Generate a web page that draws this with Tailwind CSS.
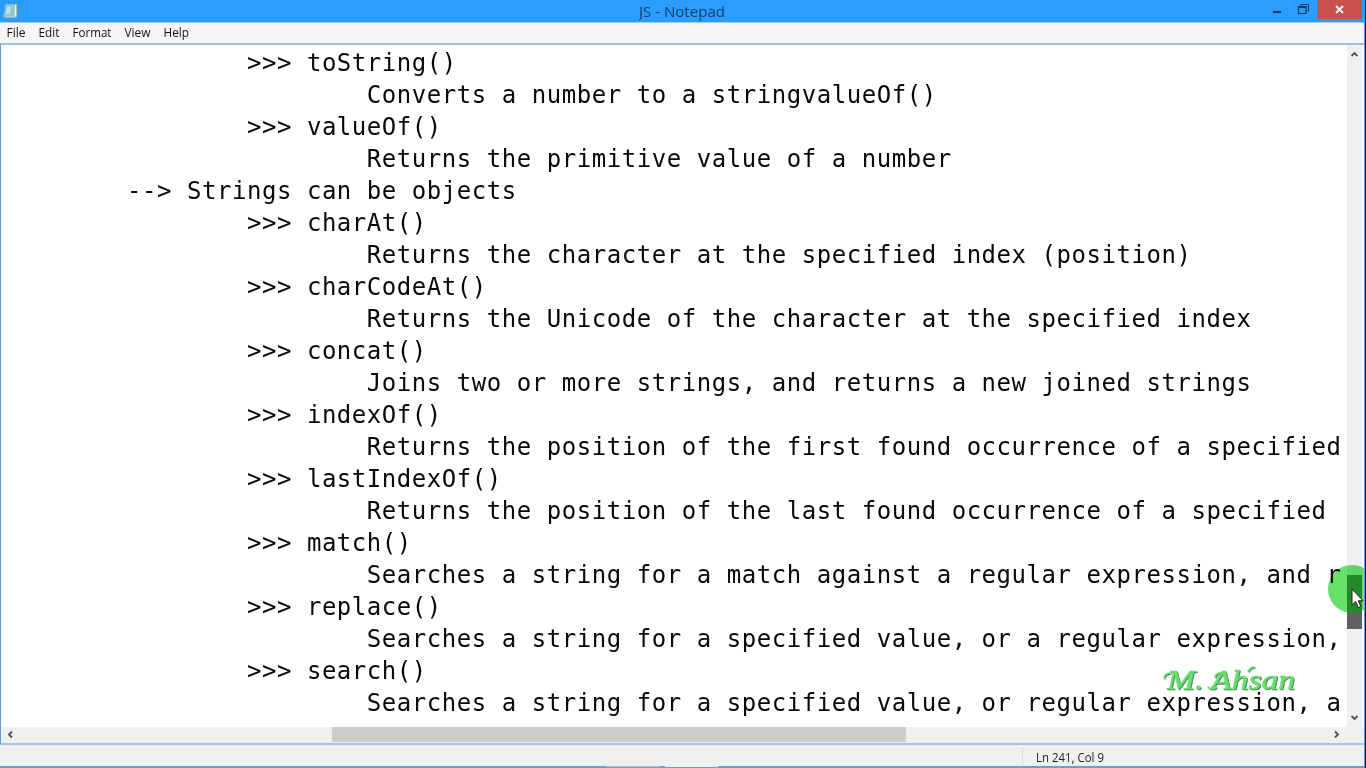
<!DOCTYPE html>
<html lang="en">
<head>
<meta charset="utf-8">
<title>JS - Notepad</title>
<script src="https://cdn.jsdelivr.net/npm/@tailwindcss/browser@4"></script>
</head>
<body class="w-[1366px] h-[768px] overflow-hidden bg-[#f0f0f0] font-['Open_Sans',sans-serif]">
<div class="relative flex h-[768px] w-[1366px] flex-col overflow-hidden">
  <header class="flex h-[22px] shrink-0 items-start bg-[#2b9dff]">
    <svg class="ml-[3px] mt-[3px] shrink-0" width="15" height="16" viewBox="0 0 15 16">
      <path d="M3 1.5h11v13H2z" fill="#eef6ec"/>
      <path d="M2.500 2h9.500l-.5 11.500H.5z" fill="#8cc9d1"/>
      <path d="M4 4h4L6.500 11H3z" fill="#bfe4e6"/>
      <path d="M3 1.500h10" stroke="#6aa9bf" stroke-dasharray="1 1"/>
      <path d="M.5 14.200H13.700V2" stroke="#a9a98c" fill="none"/>
    </svg>
    <div class="flex-1 pl-[621px] pt-[3px]"><svg class="block" width="90" height="18"><text x="0" y="14" font-size="14" textLength="86" lengthAdjust="spacingAndGlyphs" fill="#123f69">JS - Notepad</text></svg></div>
    <svg class="shrink-0" width="49" height="22" viewBox="0 0 49 22">
      <path d="M5 12h8" stroke="#12385c" stroke-width="2"/>
      <path d="M33 6V4.500h7.500V11H38" stroke="#12385c" fill="none"/>
      <path d="M30.500 6.500h7.500v7h-7.500z" stroke="#12385c" stroke-width="1.200" fill="none"/><path d="M30 7h8.500" stroke="#12385c" stroke-width="2"/>
    </svg>
    <div class="flex h-[19px] w-[45px] items-center justify-center bg-[#c9504c]"><svg width="9" height="9" viewBox="0 0 9 9"><path d="m1 1 7 7M8 1 1 8" stroke="#fff" stroke-width="1.8"/></svg></div>
    <div class="h-full w-[4px]"></div>
  </header>
  <nav class="h-[21px] shrink-0 border-t border-[#9ccdf8] bg-[#f5f6f7]">
    <svg class="block" width="240" height="20" font-size="12" fill="#111">
      <text x="6.500" y="14" textLength="19" lengthAdjust="spacingAndGlyphs">File</text>
      <text x="38.500" y="14" textLength="21" lengthAdjust="spacingAndGlyphs">Edit</text>
      <text x="72.500" y="14" textLength="39" lengthAdjust="spacingAndGlyphs">Format</text>
      <text x="124.500" y="14" textLength="26" lengthAdjust="spacingAndGlyphs">View</text>
      <text x="163.500" y="14" textLength="25.500" lengthAdjust="spacingAndGlyphs">Help</text>
    </svg>
  </nav>
  <main class="flex h-[702px] shrink-0 flex-col border-y-2 border-l border-t-[#9fc0e4] border-b-[#a4c4ea] border-l-[#6a9bd0] bg-white">
    <div class="flex h-[682px]">
      <pre class="w-[1346px] shrink-0 overflow-hidden pl-[6px] pt-[2px] font-['DejaVu_Sans_Mono',monospace] text-[24px] leading-[32px] tracking-[0.545px] text-[#080808]">                &gt;&gt;&gt; toString()
                        Converts a number to a stringvalueOf()
                &gt;&gt;&gt; valueOf()
                        Returns the primitive value of a number
        --&gt; Strings can be objects
                &gt;&gt;&gt; charAt()
                        Returns the character at the specified index (position)
                &gt;&gt;&gt; charCodeAt()
                        Returns the Unicode of the character at the specified index
                &gt;&gt;&gt; concat()
                        Joins two or more strings, and returns a new joined strings
                &gt;&gt;&gt; indexOf()
                        Returns the position of the first found occurrence of a specified
                &gt;&gt;&gt; lastIndexOf()
                        Returns the position of the last found occurrence of a specified
                &gt;&gt;&gt; match()
                        Searches a string for a match against a regular expression, and r
                &gt;&gt;&gt; replace()
                        Searches a string for a specified value, or a regular expression,
                &gt;&gt;&gt; search()
                        Searches a string for a specified value, or regular expression, a</pre>
      <div class="flex w-[15px] shrink-0 flex-col items-center bg-[#f0f0f0]">
        <svg class="mt-[5px] shrink-0" width="9" height="8" viewBox="0 0 9 8"><path d="M1.500 6 4.500 3 7.500 6" stroke="#505050" stroke-width="1.800" fill="none"/></svg>
        <div class="mt-[517px] h-[54px] w-[15px] shrink-0 bg-[#606060]"></div>
        <svg class="mt-[85px] shrink-0" width="9" height="8" viewBox="0 0 9 8"><path d="M1.500 2 4.500 5 7.500 2" stroke="#505050" stroke-width="1.800" fill="none"/></svg>
      </div>
    </div>
    <div class="flex h-[16px] w-[1363px] items-start bg-[#f0f0f0]">
      <svg class="ml-[5px] mt-[3px] shrink-0" width="8" height="9" viewBox="0 0 8 9"><path d="M6 1.500 3 4.500 6 7.500" stroke="#505050" stroke-width="1.800" fill="none"/></svg>
      <div class="ml-[318px] h-[15px] w-[574px] bg-[#cdcdcd]"></div>
      <svg class="ml-[427px] mt-[3px] shrink-0" width="8" height="9" viewBox="0 0 8 9"><path d="M2 1.500 5 4.500 2 7.500" stroke="#505050" stroke-width="1.800" fill="none"/></svg>
    </div>
  </main>
  <footer class="flex h-[23px] shrink-0 flex-col bg-[#f0f0f0]">
    <div class="flex h-[21px] pt-[2px]">
      <div class="ml-[1022px] h-[18px] w-px bg-[#dcdcdc]"></div>
      <svg class="ml-[13px]" width="80" height="19"><text x="0" y="15" font-size="12" textLength="68" lengthAdjust="spacingAndGlyphs" fill="#222">Ln 241, Col 9</text></svg>
    </div>
    <div class="flex h-[2px] bg-[#6f9ec9]"><div class="ml-[606px] h-px w-[54px] bg-[#a9c6e0]"></div><div class="ml-[5px] h-px w-[53px] bg-[#e8eff8]"></div></div>
  </footer>

  <svg class="absolute left-[1150px] top-[658px] font-['Liberation_Serif',serif] italic drop-shadow-[1px_1px_0_#4d8a50]" width="160" height="46" font-size="28" fill="#69df71" stroke="#69df71">
    <text x="17" y="31" textLength="128" lengthAdjust="spacingAndGlyphs" stroke-width=".5">M. Ahsan</text>
    <path d="M20 15q-6 1-6 5M58 29q3 3 8 0M74 15q-8-1-9 4M98 13q3-4 6-4" fill="none" stroke-width="1.500" stroke-linecap="round"/>
  </svg>
  <div class="absolute left-[1328px] top-[565px] size-[48px] rounded-full bg-[#66e16b] mix-blend-multiply"></div>
  <div class="absolute left-[1347px] top-[575px] h-[38px] w-[15px] bg-[#228b28]"></div>
  <svg class="absolute left-[1351px] top-[588px]" width="13" height="21" viewBox="0 0 13 21"><path d="M1 1v16l3.700-3.400 2.600 6 2.500-1.100-2.500-5.700H12z" fill="#fff" stroke="#222"/></svg>
  <div class="absolute left-[1364px] top-[22px] h-[744px] w-px bg-[#5f9bdd]"></div>
  <div class="absolute left-[1365px] top-0 h-[768px] w-px bg-[#101820]"></div>
</div>
</body>
</html>
